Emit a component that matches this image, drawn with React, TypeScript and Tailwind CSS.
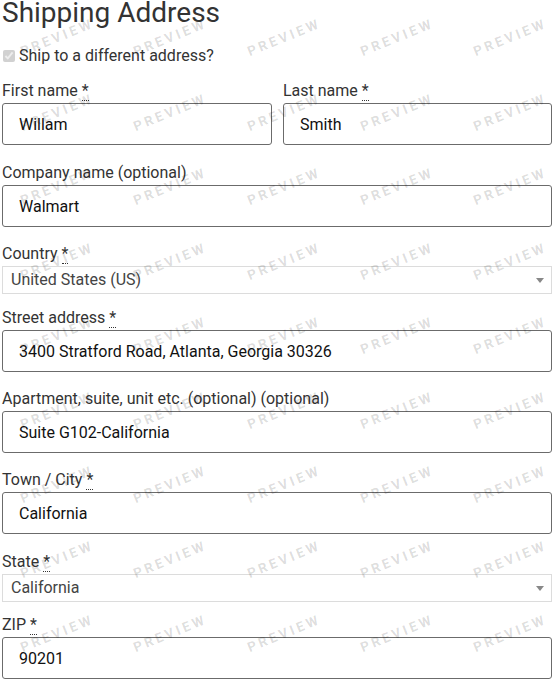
import React from 'react';

type FieldProps = {
  label: string;
  required?: boolean;
  children: React.ReactNode;
  className?: string;
};

function Field({ label, required, children, className = '' }: FieldProps) {
  return (
    <div className={className}>
      <label className="block h-[24px] leading-[26px] mb-[1px] text-[16px] text-[#333]">
        {label}
        {required && (
          <>
            {' '}
            <abbr className="no-underline border-b border-dotted border-[#333] leading-none" title="required">
              *
            </abbr>
          </>
        )}
      </label>
      {children}
    </div>
  );
}

function TextInput({ value }: { value: string }) {
  return (
    <input
      readOnly
      value={value}
      className="block w-full h-[42px] px-[16px] text-[16px] text-[#111] bg-white border border-[#6b6b6b] rounded-[3px] outline-none"
    />
  );
}

function SelectBox({ value }: { value: string }) {
  return (
    <div className="flex items-center justify-between h-[28px] pl-[8px] pr-[7px] border border-[#dcdcdc] bg-white text-[16px] text-[#444]">
      <span>{value}</span>
      <span className="w-0 h-0 border-l-[4px] border-r-[4px] border-t-[5px] border-l-transparent border-r-transparent border-t-[#888]" />
    </div>
  );
}

function Watermark() {
  const cells = Array.from({ length: 50 });
  return (
    <div className="pointer-events-none absolute inset-0 overflow-hidden">
      <div className="grid grid-cols-[repeat(5,113.4px)] auto-rows-[74.5px]">
        {cells.map((_, i) => (
          <div key={i} className="flex items-center justify-center">
            <span className="-rotate-[22deg] text-[13.5px] font-bold tracking-[0.22em] text-black/[0.14] select-none">
              PREVIEW
            </span>
          </div>
        ))}
      </div>
    </div>
  );
}

export default function App() {
  return (
    <div className="relative w-[554px] h-[681px] overflow-hidden bg-white font-['Roboto',sans-serif]">
      <div className="px-[2px]">
        <h3 className="text-[28px] leading-[26px] text-[#333] font-normal">Shipping Address</h3>

        <label className="flex items-center gap-[4px] mt-[18px] h-[24px] text-[16px] text-[#333]">
          <input type="checkbox" defaultChecked disabled className="w-[12px] h-[12px] ml-[1px] accent-[#666]" />
          Ship to a different address?
        </label>

        <div className="grid grid-cols-[270px_269px] gap-x-[11px] mt-[10px] mb-[15px]">
          <Field label="First name" required>
            <TextInput value="Willam" />
          </Field>
          <Field label="Last name" required>
            <TextInput value="Smith" />
          </Field>
        </div>

        <Field label="Company name (optional)" className="mb-[14px]">
          <TextInput value="Walmart" />
        </Field>

        <Field label="Country" required className="mb-[11px]">
          <SelectBox value="United States (US)" />
        </Field>

        <Field label="Street address" required className="mb-[14px]">
          <TextInput value="3400 Stratford Road, Atlanta, Georgia 30326" />
        </Field>

        <Field label="Apartment, suite, unit etc. (optional) (optional)" className="mb-[14px]">
          <TextInput value="Suite G102-California" />
        </Field>

        <Field label="Town / City" required className="mb-[15px]">
          <TextInput value="California" />
        </Field>

        <Field label="State" required className="mb-[10px]">
          <SelectBox value="California" />
        </Field>

        <Field label="ZIP" required>
          <TextInput value="90201" />
        </Field>
      </div>
      <Watermark />
    </div>
  );
}
